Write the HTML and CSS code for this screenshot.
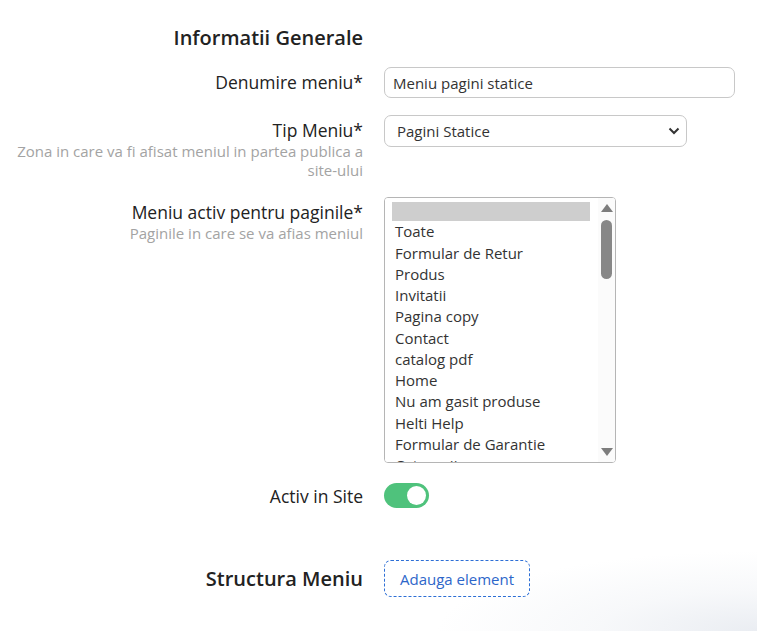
FILE: index.html
```html
<!DOCTYPE html>
<html lang="en">
<head>
  <meta charset="UTF-8"/>
  <meta name="viewport" content="width=device-width, initial-scale=1.0"/>
  <title>Meniu</title>
  <link rel="stylesheet" href="styles.css">
</head>
<body>
  <div class="page">
    <div class="form-row heading-row">
      <h2 class="section-title">Informatii Generale</h2>
      <div></div>
    </div>

    <div class="form-row">
      <label class="field-label" for="menuName">Denumire meniu*</label>
      <input type="text" id="menuName" class="text-input" value="Meniu pagini statice"/>
    </div>

    <div class="form-row">
      <div class="field-label">
        Tip Meniu*
        <span class="field-help">Zona in care va fi afisat meniul in partea publica a site-ului</span>
      </div>
      <div class="select-wrap">
        <select class="select-input">
          <option>Pagini Statice</option>
          <option>Meniu Principal</option>
          <option>Footer</option>
        </select>
        <svg class="select-arrow" viewBox="0 0 12 8" width="12" height="8"><path d="M1.5 1.5 L6 6 L10.5 1.5" fill="none" stroke="#333" stroke-width="2"/></svg>
      </div>
    </div>

    <div class="form-row">
      <div class="field-label">
        Meniu activ pentru paginile*
        <span class="field-help">Paginile in care se va afias meniul</span>
      </div>
      <div class="list-wrap">
        <select class="list-input" multiple size="12">
          <option selected></option>
          <option>Toate</option>
          <option>Formular de Retur</option>
          <option>Produs</option>
          <option>Invitatii</option>
          <option>Pagina copy</option>
          <option>Contact</option>
          <option>catalog pdf</option>
          <option>Home</option>
          <option>Nu am gasit produse</option>
          <option>Helti Help</option>
          <option>Formular de Garantie</option>
          <option>Categorii</option>
          <option>Cos</option>
          <option>Checkout</option>
          <option>Despre noi</option>
          <option>Termeni si conditii</option>
        </select>
        <!-- scrollbar drawn by hand, headless hides the native one -->
        <div class="scrollbar">
          <svg class="scroll-arrow" viewBox="0 0 12 8" width="12" height="8"><path d="M0 8 L6 0 L12 8 Z" fill="#7d7d7d"/></svg>
          <div class="scroll-track"><div class="scroll-thumb"></div></div>
          <svg class="scroll-arrow" viewBox="0 0 12 8" width="12" height="8"><path d="M0 0 L6 8 L12 0 Z" fill="#7d7d7d"/></svg>
        </div>
      </div>
    </div>

    <div class="form-row toggle-row">
      <div class="field-label">Activ in Site</div>
      <label class="switch">
        <input type="checkbox" checked/>
        <span class="slider"></span>
      </label>
    </div>

    <div class="form-row structure-row">
      <h2 class="section-title">Structura Meniu</h2>
      <div><button class="add-btn">Adauga element</button></div>
    </div>
  </div>
</body>
</html>
```

FILE: styles.css
```css
html, body {
  height: 100%;
}

body {
  margin: 0;
  font-family: "Open Sans", "Liberation Sans", sans-serif;
  color: #222;
  background:
    radial-gradient(ellipse 320px 80px at 100% 100%, #eaedf2 0%, rgba(242,244,247,0.6) 50%, rgba(255,255,255,0) 100%),
    #fff;
  overflow: hidden;
}

.page {
  padding-top: 24px;
}

.form-row {
  display: grid;
  grid-template-columns: 363px 1fr;
  column-gap: 21px;
  align-items: start;
  margin-bottom: 17px;
}

.section-title {
  margin: 0;
  text-align: right;
  font-size: 20px;
  font-weight: 600;
  color: #222;
  line-height: 28px;
}

.heading-row {
  margin-bottom: 15px;
}

.field-label {
  text-align: right;
  font-size: 17.5px;
  line-height: 24px;
  padding-top: 3px;
  color: #222;
}

.field-help {
  display: block;
  font-size: 15px;
  line-height: 19px;
  color: #a3a3a3;
  padding-left: 6px;
}

.text-input {
  width: 351px;
  height: 31px;
  box-sizing: border-box;
  border: 1px solid #c8c8c8;
  border-radius: 7px;
  padding: 0 8px;
  font-family: inherit;
  font-size: 15px;
  color: #333;
}

.select-wrap {
  position: relative;
  width: 303px;
}

.select-input {
  width: 303px;
  height: 32px;
  box-sizing: border-box;
  border: 1px solid #c8c8c8;
  border-radius: 7px;
  padding: 0 12px;
  font-family: inherit;
  font-size: 15px;
  color: #333;
  background: #fff;
  appearance: none;
  -webkit-appearance: none;
}

.select-arrow {
  position: absolute;
  right: 7px;
  top: 12px;
  pointer-events: none;
}

.list-wrap {
  position: relative;
  width: 232px;
  height: 266px;
}

.list-input {
  width: 232px;
  height: 266px;
  box-sizing: border-box;
  border: 1px solid #b5b5b5;
  border-radius: 4px;
  padding: 4px 25px 0 7px;
  font-family: inherit;
  font-size: 15px;
  color: #333;
  background: #fff;
  outline: none;
}

.list-input option {
  padding: 0 3px 1.25px;
}

.list-input option:checked {
  background: #cecece;
}

.scrollbar {
  position: absolute;
  top: 1px;
  right: 1px;
  bottom: 1px;
  width: 17px;
  display: flex;
  flex-direction: column;
  align-items: center;
  background: #fbfbfb;
  border-radius: 0 3px 3px 0;
}

.scroll-arrow {
  margin: 6px 0;
  flex: none;
}

.scroll-track {
  flex: 1;
  width: 100%;
  display: flex;
  justify-content: center;
}

.scroll-thumb {
  width: 11px;
  height: 59px;
  margin-top: 2px;
  background: #878787;
  border-radius: 6px;
}

.toggle-row {
  align-items: center;
  margin-top: 20px;
}

.toggle-row .field-label {
  padding-top: 0;
}

.switch {
  position: relative;
  display: inline-block;
  width: 45px;
  height: 25px;
}

.switch input {
  display: none;
}

.slider {
  position: absolute;
  inset: 0;
  background: #4fc27c;
  border-radius: 13px;
}

.slider::after {
  content: "";
  position: absolute;
  width: 19px;
  height: 19px;
  right: 3px;
  top: 3px;
  background: #fff;
  border-radius: 50%;
}

.structure-row {
  align-items: center;
  margin-top: 52px;
}

.add-btn {
  height: 37px;
  padding: 0 15px;
  border: 1px dashed #2d6fd6;
  border-radius: 7px;
  background: #fff;
  color: #2d66c9;
  font-family: inherit;
  font-size: 15px;
  cursor: pointer;
}
```
